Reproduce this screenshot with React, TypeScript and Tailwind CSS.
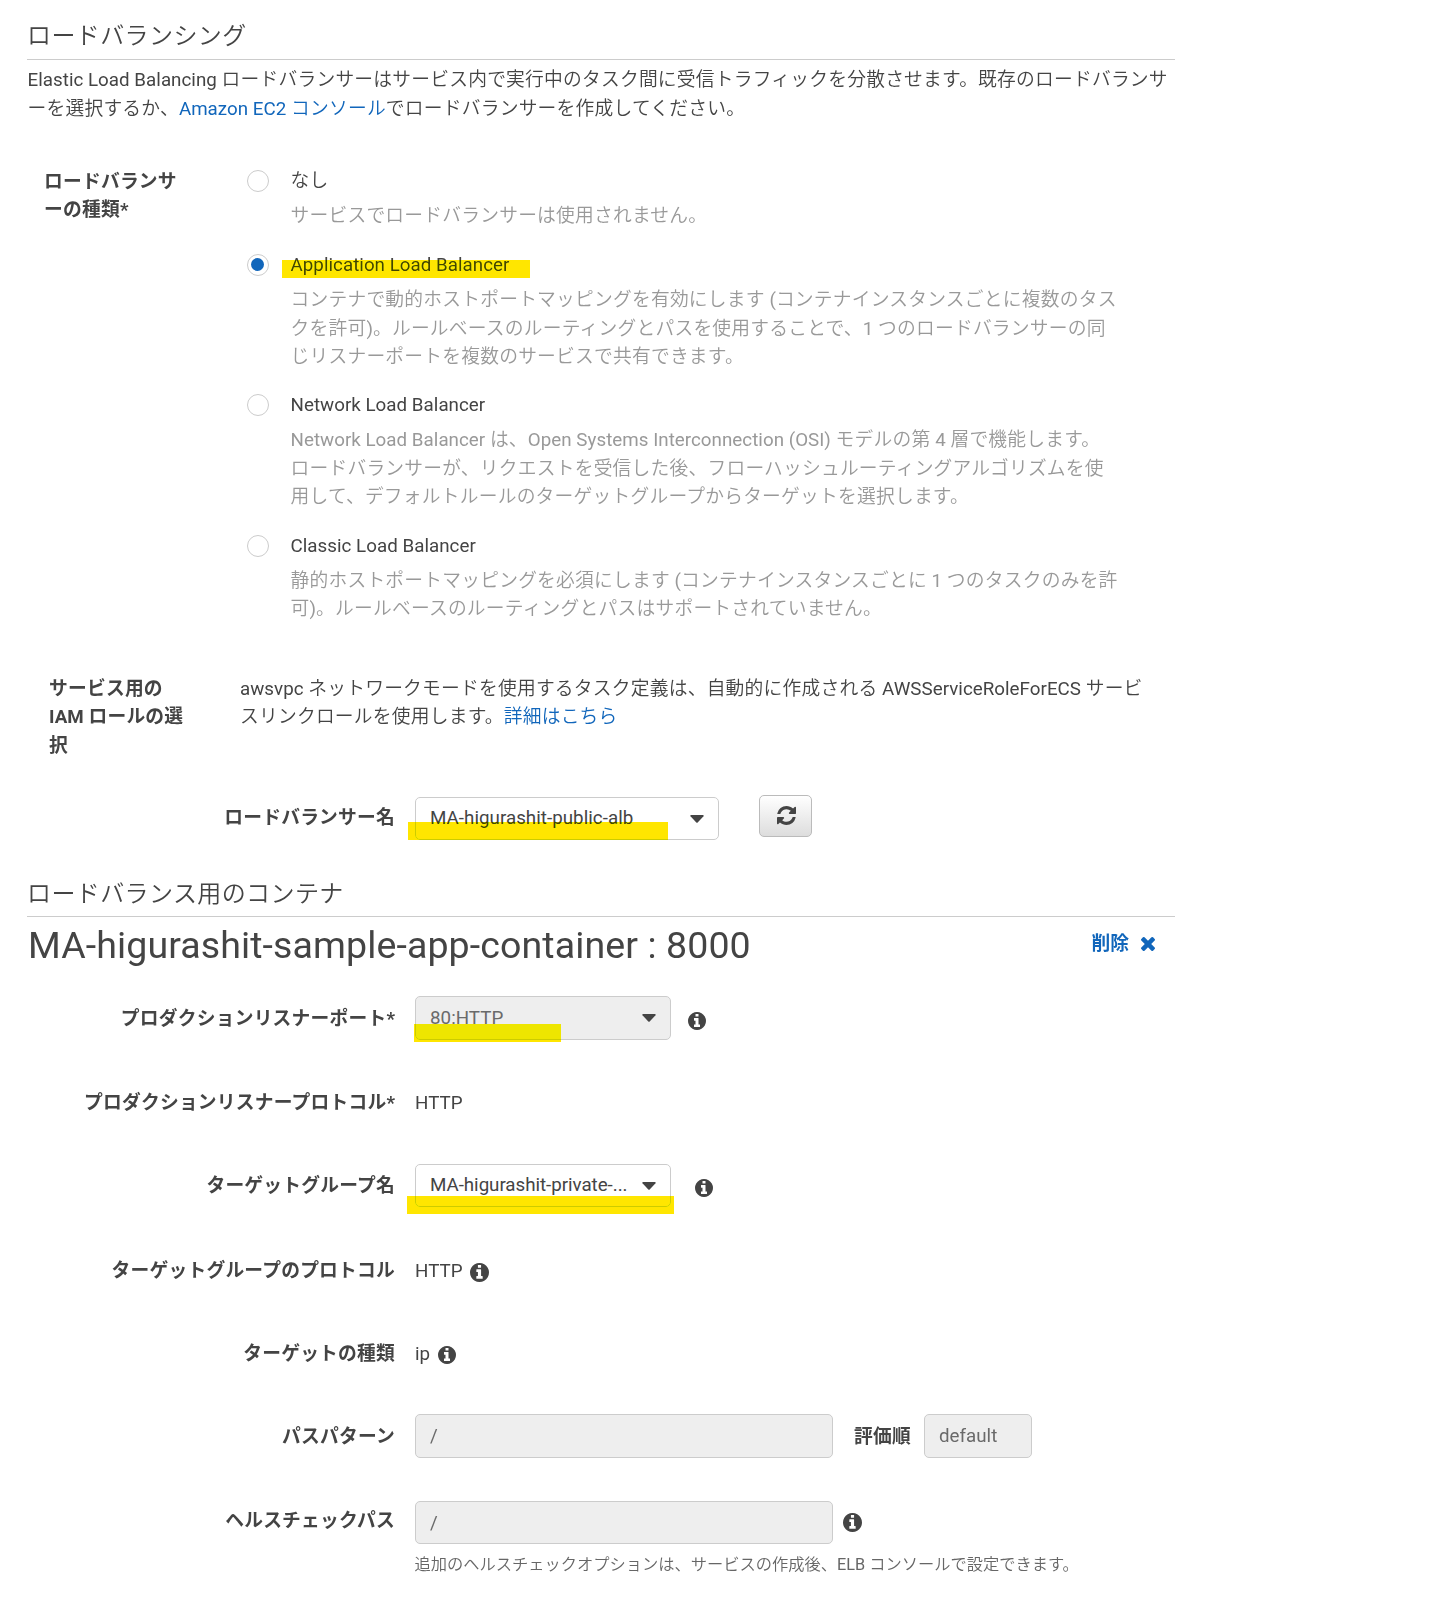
import React from "react";

const body = "font-['Roboto','Noto_Sans_CJK_JP_DemiLight','Noto_Sans_CJK_JP',sans-serif]";
const strong = "font-bold font-['Roboto','Noto_Sans_CJK_JP',sans-serif]";

/** Text with slightly wider tracking on the Japanese runs than on the Latin ones. */
function T({ children }: { children: string }) {
  const runs = children.match(/[\x20-\x7e]+|[^\x20-\x7e]+/g) ?? [];
  return (
    <>
      {runs.map((run, i) => (
        <span key={i} className={/[\x20-\x7e]/.test(run) ? "tracking-[0.03px]" : "tracking-[0.22px]"}>
          {run}
        </span>
      ))}
    </>
  );
}

function Info({ className = "" }: { className?: string }) {
  return (
    <svg viewBox="0 128 1536 1536" className={`shrink-0 fill-[#444] ${className}`}>
      <path d="M1024 1376v-160q0-14-9-23t-23-9h-96v-512q0-14-9-23t-23-9h-320q-14 0-23 9t-9 23v160q0 14 9 23t23 9h96v320h-96q-14 0-23 9t-9 23v160q0 14 9 23t23 9h448q14 0 23-9t9-23zm-128-896v-160q0-14-9-23t-23-9h-192q-14 0-23 9t-9 23v160q0 14 9 23t23 9h192q14 0 23-9t9-23zm640 416q0 209-103 385.5t-279.5 279.5-385.5 103-385.5-103-279.5-279.5-103-385.5 103-385.5 279.5-279.5 385.5-103 385.5 103 279.5 279.5 103 385.5z" />
    </svg>
  );
}

function Caret() {
  return (
    <svg viewBox="0 0 14 8" className="h-2 w-3.5 shrink-0 fill-[#444]">
      <path d="M1 0h12q1 0.3 0.5 1.2L7.7 7.5q-.7.6-1.4 0L.5 1.2Q0 .3 1 0z" />
    </svg>
  );
}

function Mark({ className }: { className: string }) {
  return <span className={`pointer-events-none absolute bg-[#ffe600] mix-blend-darken ${className}`} />;
}

function Option({ title, lines, checked, className }: { title: string; lines: string[]; checked?: boolean; className: string }) {
  return (
    <div className={`flex ${className}`}>
      <span className="mt-[3px] flex size-[22px] shrink-0 items-center justify-center rounded-full border border-[#ccc]">
        {checked && <span className="mr-px mb-px size-[13px] rounded-full bg-[#1166bb]" />}
      </span>
      <div className="relative ml-[21.5px]">
        <div>
          <T>{title}</T>
        </div>
        {checked && <Mark className="top-[9px] -left-[8.5px] h-[18px] w-[248px]" />}
        <div className="mt-[7px] text-[#999]">
          {lines.map((l) => (
            <div key={l}>
              <T>{l}</T>
            </div>
          ))}
        </div>
      </div>
    </div>
  );
}

function Row({ label, labelClass = "", className, children }: { label: string; labelClass?: string; className: string; children: React.ReactNode }) {
  return (
    <div className={`flex items-center ${className}`}>
      <div className={`w-[395px] shrink-0 text-right ${strong} ${labelClass}`}>
        <T>{label}</T>
      </div>
      <div className="ml-[20px] flex items-center">{children}</div>
    </div>
  );
}

export default function App() {
  return (
    <div className={`${body} h-[1617px] w-[1441px] overflow-hidden bg-white text-[18.75px] leading-[28.125px] whitespace-nowrap text-[#444]`}>
      <div className="ml-[27px] flex h-[60px] w-[1148px] items-center border-b border-[#ccc] pt-[14px] text-[24px] tracking-[0.4px]">ロードバランシング</div>
      <div className="mt-[6px] ml-[27.5px]">
        <div>
          <T>Elastic Load Balancing ロードバランサーはサービス内で実行中のタスク間に受信トラフィックを分散させます。既存のロードバランサ</T>
        </div>
        <div className="pt-px">
          <T>ーを選択するか、</T>
          <span className="text-[#1166bb]">
            <T>Amazon EC2 コンソール</T>
          </span>
          <T>でロードバランサーを作成してください。</T>
        </div>
      </div>

      <div className="mt-[44px] flex h-[508px]">
        <div className={`ml-[44px] w-[203px] pt-px ${strong}`}>
          <div>
            <T>ロードバランサ</T>
          </div>
          <div>
            <T>ーの種類*</T>
          </div>
        </div>
        <div>
          <Option className="h-[84px]" title="なし" lines={["サービスでロードバランサーは使用されません。"]} />
          <Option
            className="h-[140px]"
            checked
            title="Application Load Balancer"
            lines={[
              "コンテナで動的ホストポートマッピングを有効にします (コンテナインスタンスごとに複数のタス",
              "クを許可)。ルールベースのルーティングとパスを使用することで、1 つのロードバランサーの同",
              "じリスナーポートを複数のサービスで共有できます。",
            ]}
          />
          <Option
            className="h-[140.5px]"
            title="Network Load Balancer"
            lines={[
              "Network Load Balancer は、Open Systems Interconnection (OSI) モデルの第 4 層で機能します。",
              "ロードバランサーが、リクエストを受信した後、フローハッシュルーティングアルゴリズムを使",
              "用して、デフォルトルールのターゲットグループからターゲットを選択します。",
            ]}
          />
          <Option
            className="h-[100px]"
            title="Classic Load Balancer"
            lines={["静的ホストポートマッピングを必須にします (コンテナインスタンスごとに 1 つのタスクのみを許", "可)。ルールベースのルーティングとパスはサポートされていません。"]}
          />
        </div>
      </div>

      <div className="flex h-[122px]">
        <div className={`ml-[49px] w-[191px] ${strong}`}>
          <div>
            <T>サービス用の</T>
          </div>
          <div>
            <T>IAM ロールの選</T>
          </div>
          <div>択</div>
        </div>
        <div>
          <div>
            <T>awsvpc ネットワークモードを使用するタスク定義は、自動的に作成される AWSServiceRoleForECS サービ</T>
          </div>
          <div>
            <T>スリンクロールを使用します。</T>
            <span className="text-[#1166bb]">
              <T>詳細はこちら</T>
            </span>
          </div>
        </div>
      </div>

      <Row label="ロードバランサー名" labelClass="pb-[2px]" className="h-[43px]">
        <div className="relative flex h-[43px] w-[304px] items-center justify-between rounded-[5px] border border-[#ccc] bg-white pr-[14px] pl-[14px]">
          <span className="-mt-[2px]">
            <T>MA-higurashit-public-alb</T>
          </span>
          <Caret />
          <Mark className="top-[24px] -left-[8px] h-[18px] w-[260px]" />
        </div>
        <button className="-mt-[6px] ml-[40px] flex h-[42px] w-[53px] items-center justify-center rounded-[5px] border border-[#bbb] bg-linear-to-b from-white to-[#ddd]">
          <svg viewBox="128 128 1536 1536" className="mb-px ml-px size-[19px] fill-[#444]">
            <path d="M1639 1056q0 5-1 7-64 268-268 434.5t-478 166.5q-146 0-282.5-55t-243.5-157l-129 129q-19 19-45 19t-45-19-19-45v-448q0-26 19-45t45-19h448q26 0 45 19t19 45-19 45l-137 137q71 66 161 102t187 36q134 0 250-65t186-179q11-17 53-117 8-23 30-23h192q13 0 22.5 9.5t9.5 22.5zm25-800v448q0 26-19 45t-45 19h-448q-26 0-45-19t-19-45 19-45l138-138q-148-137-349-137-134 0-250 65t-186 179q-11 17-53 117-8 23-30 23h-199q-13 0-22.5-9.5t-9.5-22.5v-7q65-268 270-434.5t480-166.5q146 0 284 55.5t245 156.5l130-129q19-19 45-19t45 19 19 45z" />
          </svg>
        </button>
      </Row>

      <div className="mt-[31px] ml-[27px] flex h-[46px] w-[1148px] items-center border-b border-[#ccc] text-[24px] tracking-[0.4px]">ロードバランス用のコンテナ</div>
      <div className="ml-[28px] flex h-[79px] w-[1127px] justify-between">
        <div className="text-[37.5px] leading-[57px] tracking-[0.11px]">MA-higurashit-sample-app-container : 8000</div>
        <div className={`flex h-[54px] items-center gap-[12px] text-[#1166bb] ${strong}`}>
          削除
          <svg viewBox="302 366 1188 1188" className="size-[14px] fill-[#1166bb]">
            <path d="M1490 1322q0 40-28 68l-136 136q-28 28-68 28t-68-28l-294-294-294 294q-28 28-68 28t-68-28l-136-136q-28-28-28-68t28-68l294-294-294-294q-28-28-28-68t28-68l136-136q28-28 68-28t68 28l294 294 294-294q28-28 68-28t68 28l136 136q28 28 28 68t-28 68l-294 294 294 294q28 28 28 68z" />
          </svg>
        </div>
      </div>

      <Row label="プロダクションリスナーポート*" labelClass="pt-[2px]" className="h-[44px]">
        <div className="relative flex h-[44px] w-[256px] items-center justify-between rounded-[5px] border border-[#ccc] bg-[#eee] px-[14px] text-[#6a6a6a]">
          <span>
            <T>80:HTTP</T>
          </span>
          <Caret />
          <Mark className="top-[27px] -left-[2px] h-[18px] w-[147px]" />
        </div>
        <Info className="mt-[6px] ml-[17px] size-[18px]" />
      </Row>
      <Row label="プロダクションリスナープロトコル*" className="mt-[41px] h-[44px]">
        <T>HTTP</T>
      </Row>
      <Row label="ターゲットグループ名" labelClass="pt-px" className="mt-[39px] h-[43px]">
        <div className="relative flex h-[43px] w-[256px] items-center justify-between rounded-[5px] border border-[#ccc] bg-white px-[14px]">
          <span className="-mt-[2px] tracking-[-0.04px]">MA-higurashit-private-...</span>
          <Caret />
          <Mark className="top-[31px] -left-[9px] h-[18px] w-[267px]" />
        </div>
        <Info className="mt-[5px] ml-[24px] size-[18px]" />
      </Row>
      <Row label="ターゲットグループのプロトコル" className="mt-[42px] h-[44px]">
        <T>HTTP</T>
        <Info className="mt-[2px] ml-[7px] size-[19px]" />
      </Row>
      <Row label="ターゲットの種類" className="mt-[39px] h-[44px]">
        ip
        <Info className="mt-[2px] ml-[8px] size-[18px]" />
      </Row>
      <Row label="パスパターン" labelClass="pt-[2px]" className="mt-[38px] h-[44px]">
        <div className="flex h-[44px] w-[418px] items-center rounded-[5px] border border-[#ccc] bg-[#eee] px-[14px] text-[#6a6a6a]">/</div>
        <span className={`ml-[21px] w-[70px] pt-[2px] ${strong}`}>
          <T>評価順</T>
        </span>
        <div className="flex h-[44px] w-[108px] items-center rounded-[5px] border border-[#ccc] bg-[#eee] px-[14px] text-[#6a6a6a]">default</div>
      </Row>
      <Row label="ヘルスチェックパス" labelClass="pb-[4px]" className="mt-[43px] h-[43px]">
        <div className="flex h-[43px] w-[418px] items-center rounded-[5px] border border-[#ccc] bg-[#eee] px-[14px] text-[#6a6a6a]">/</div>
        <Info className="ml-[10px] size-[19px]" />
      </Row>
      <div className="mt-[7px] ml-[414.5px] text-[16.25px] text-[#666]">追加のヘルスチェックオプションは、サービスの作成後、ELB コンソールで設定できます。</div>
    </div>
  );
}
